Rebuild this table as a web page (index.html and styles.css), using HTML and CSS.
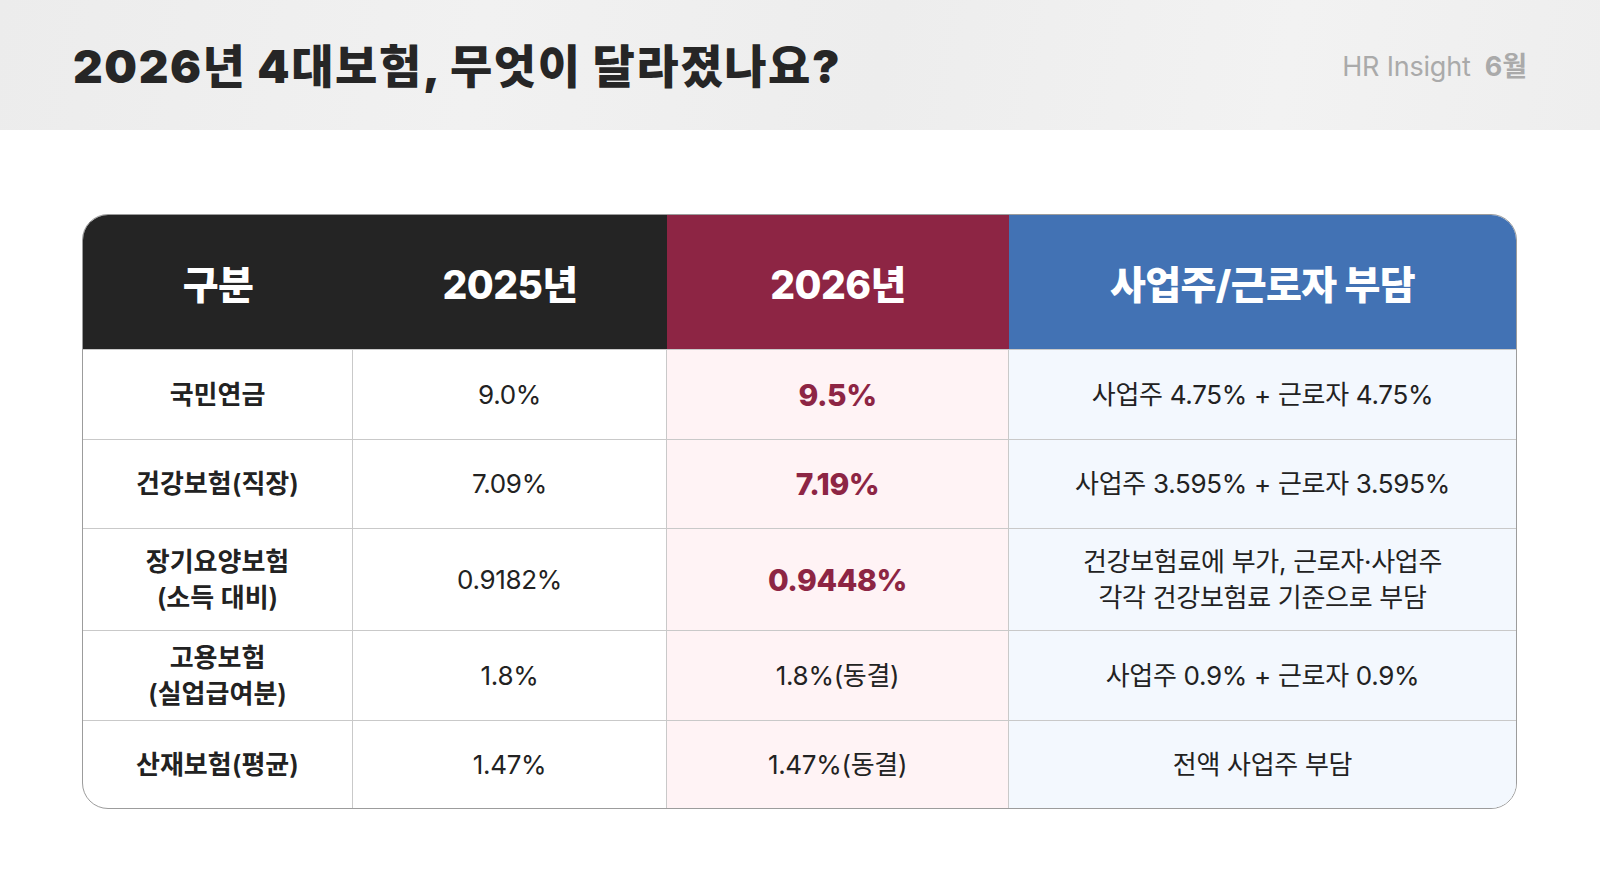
FILE: index.html
```html
<!DOCTYPE html>
<html lang="ko">
<head>
<meta charset="utf-8">
<title>2026년 4대보험</title>
<link rel="stylesheet" href="styles.css">
</head>
<body>
<header class="topbar">
  <h1 class="title">2026년 4대보험, 무엇이 달라졌나요?</h1>
  <div class="brand"><span class="brand-name">HR Insight</span><span class="brand-month">6월</span></div>
</header>
<main class="content">
  <div class="table-wrap">
    <table class="rates">
      <colgroup>
        <col class="c1"><col class="c2"><col class="c3"><col class="c4">
      </colgroup>
      <thead>
        <tr>
          <th class="h-dark">구분</th>
          <th class="h-dark">2025년</th>
          <th class="h-red">2026년</th>
          <th class="h-blue">사업주/근로자 부담</th>
        </tr>
      </thead>
      <tbody>
        <tr class="r1">
          <td class="name">국민연금</td>
          <td>9.0%</td>
          <td class="new hl">9.5%</td>
          <td class="share">사업주 4.75% + 근로자 4.75%</td>
        </tr>
        <tr class="r2">
          <td class="name">건강보험(직장)</td>
          <td>7.09%</td>
          <td class="new hl">7.19%</td>
          <td class="share">사업주 3.595% + 근로자 3.595%</td>
        </tr>
        <tr class="r3">
          <td class="name">장기요양보험<br>(소득 대비)</td>
          <td>0.9182%</td>
          <td class="new hl">0.9448%</td>
          <td class="share">건강보험료에 부가, 근로자·사업주<br>각각 건강보험료 기준으로 부담</td>
        </tr>
        <tr class="r4">
          <td class="name">고용보험<br>(실업급여분)</td>
          <td>1.8%</td>
          <td class="new">1.8%(동결)</td>
          <td class="share">사업주 0.9% + 근로자 0.9%</td>
        </tr>
        <tr class="r5">
          <td class="name">산재보험(평균)</td>
          <td>1.47%</td>
          <td class="new">1.47%(동결)</td>
          <td class="share">전액 사업주 부담</td>
        </tr>
      </tbody>
    </table>
  </div>
</main>
</body>
</html>
```

FILE: styles.css
```css
* { box-sizing: border-box; }

html, body {
  margin: 0;
  padding: 0;
  background: #ffffff;
}

body {
  width: 1600px;
  height: 889px;
  overflow: hidden;
  font-family: Inter, "Noto Sans CJK KR", sans-serif;
  color: #222222;
}

.topbar {
  height: 130px;
  padding: 0 73px 0 73px;
  display: flex;
  align-items: center;
  justify-content: space-between;
  background: linear-gradient(100deg, #ececec 0%, #f1f1f1 30%, #ededed 55%, #f2f2f2 80%, #eeeeee 100%);
}

.title {
  margin: 0;
  font-family: Inter, "Noto Sans CJK KR", sans-serif;
  font-size: 46px;
  font-weight: 900;
  letter-spacing: 1.6px;
  color: #262626;
  padding-bottom: 4px;
}

.brand {
  display: flex;
  align-items: baseline;
  gap: 14px;
  color: #aaaaaa;
  font-size: 27px;
  padding-bottom: 2px;
}

.brand-name { font-weight: 400; letter-spacing: -0.2px; }
.brand-month { font-weight: 700; }

.content {
  padding: 84px 0 0 82px;
}

.table-wrap {
  width: 1435px;
  border: 1.5px solid #9c9c9c;
  border-radius: 26px;
  overflow: hidden;
}

.rates {
  width: 100%;
  border-collapse: separate;
  border-spacing: 0;
  table-layout: fixed;
}

.c1 { width: 270px; }
.c2 { width: 314px; }
.c3 { width: 342px; }
.c4 { width: auto; }

.rates th {
  height: 134px;
  color: #ffffff;
  font-size: 39px;
  font-weight: 800;
  letter-spacing: -0.6px;
  text-align: center;
  vertical-align: middle;
  padding: 0;
}

.h-dark { background: #242424; }
.h-red { background: #8d2544; }
.h-blue { background: #4272b4; }

.rates td {
  text-align: center;
  vertical-align: middle;
  padding: 0;
  font-size: 26px;
  font-weight: 400;
  line-height: 36px;
  letter-spacing: -0.3px;
  color: #222222;
  border-top: 1px solid #c9c9c9;
  border-right: 1px solid #c9c9c9;
}

.rates td:last-child { border-right: none; }

.r1 td { height: 90px; }
.r2 td { height: 89px; }
.r3 td { height: 102px; }
.r4 td { height: 90px; }
.r5 td { height: 88px; }

.rates td.name {
  font-weight: 600;
  font-size: 26px;
  letter-spacing: 0;
}

.rates td.new {
  background: #fff3f5;
}

.rates td.hl {
  color: #8d2544;
  font-weight: 800;
  font-size: 30px;
  letter-spacing: -0.4px;
}

.rates td.share {
  background: #f3f8fe;
}
```
